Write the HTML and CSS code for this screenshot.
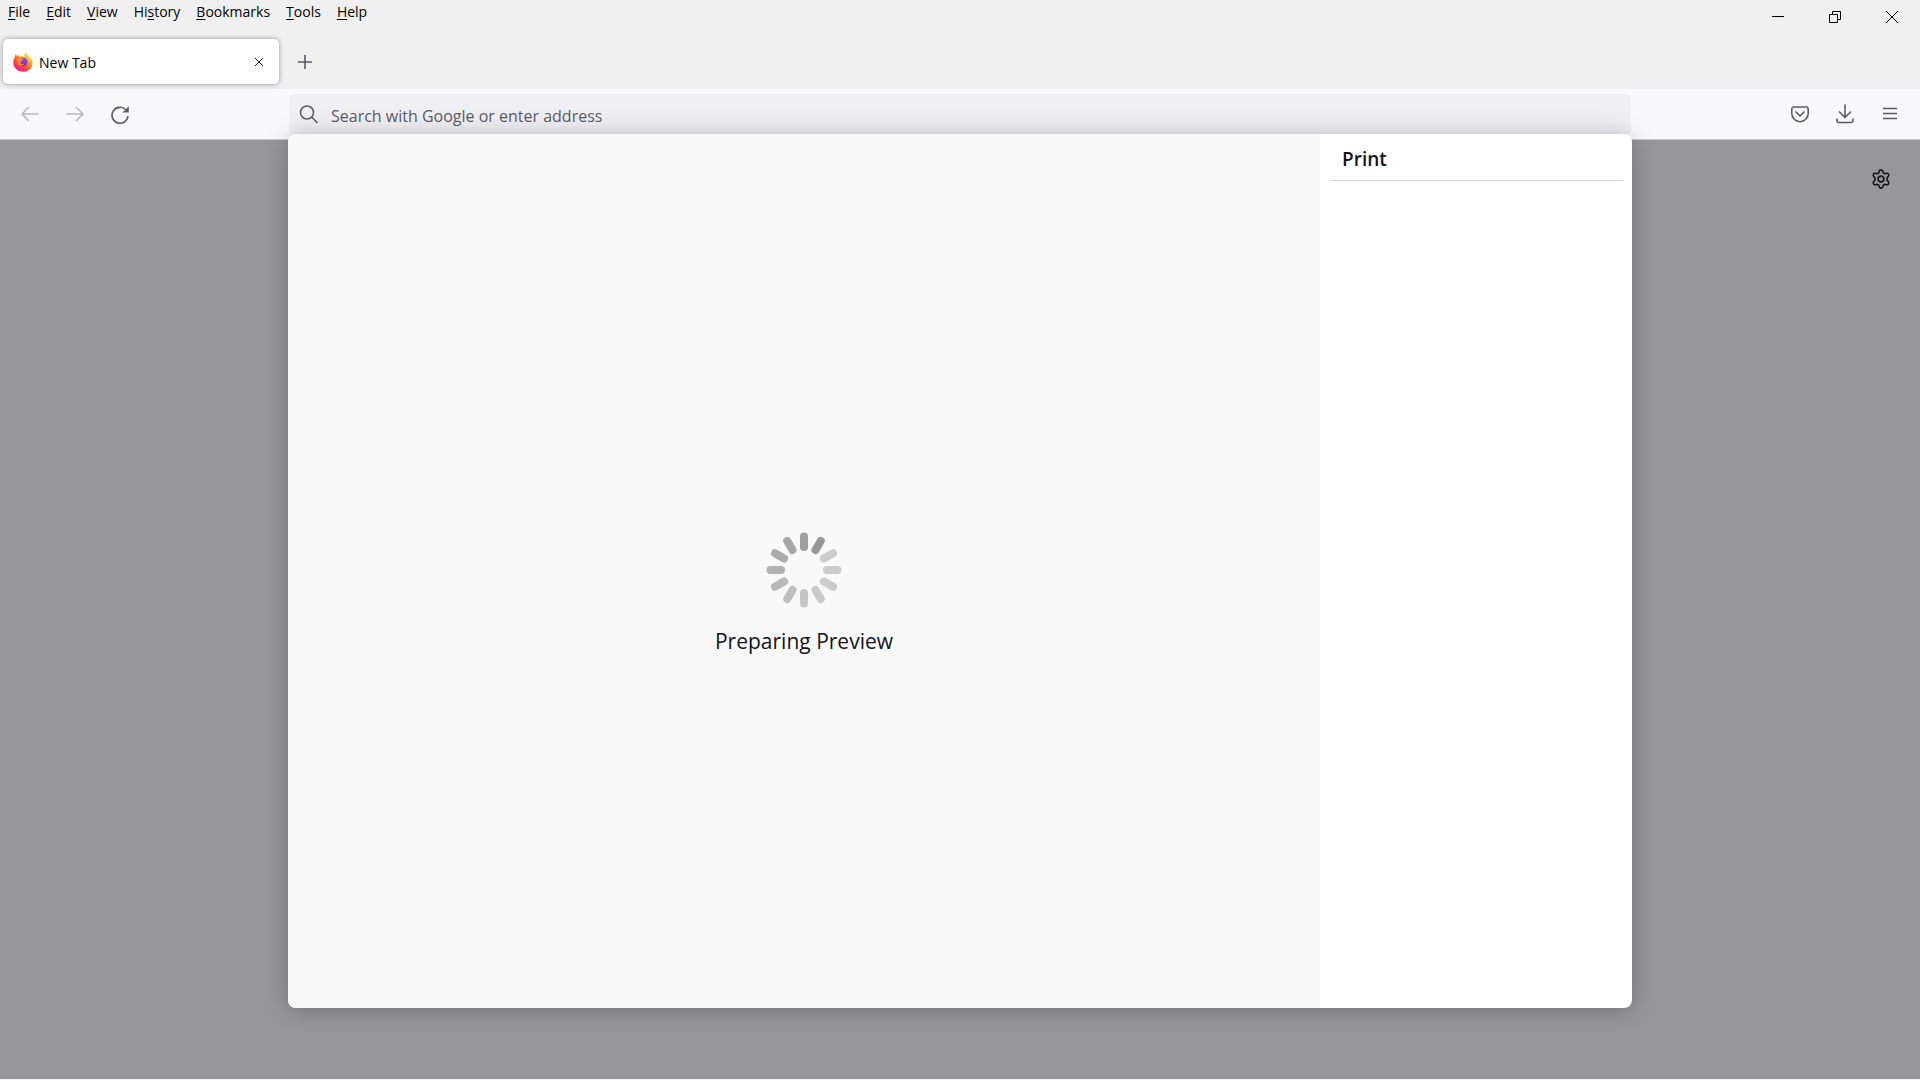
FILE: index.html
```html
<!DOCTYPE html>
<html lang="en">
<head>
<meta charset="UTF-8">
<meta name="viewport" content="width=device-width, initial-scale=1.0">
<title>New Tab</title>
<link rel="stylesheet" href="styles.css">
</head>
<body>

<header class="titlebar">
    <nav class="menubar">
        <button><u>F</u>ile</button>
        <button><u>E</u>dit</button>
        <button><u>V</u>iew</button>
        <button>Hi<u>s</u>tory</button>
        <button><u>B</u>ookmarks</button>
        <button><u>T</u>ools</button>
        <button><u>H</u>elp</button>
    </nav>
    <div class="window-controls">
        <button aria-label="Minimize">
            <svg width="14" height="14" viewBox="0 0 14 14"><path d="M1 6.500h12"/></svg>
        </button>
        <button aria-label="Restore">
            <svg width="14" height="14" viewBox="0 0 14 14"><path d="M1.500 4.500h8v8h-8zM4.500 4.500v-3h8v8h-3"/></svg>
        </button>
        <button aria-label="Close">
            <svg width="14" height="14" viewBox="0 0 14 14"><path d="M1 1l12 12M13 1L1 13"/></svg>
        </button>
    </div>
</header>

<div class="tabs">
    <div class="tab">
        <svg class="favicon" width="20" height="20" viewBox="0 0 20 20">
            <defs>
                <linearGradient id="flame" x1="0.85" y1="0.1" x2="0.25" y2="0.95">
                    <stop offset="0" stop-color="#fff44f"/>
                    <stop offset="0.35" stop-color="#ffa01e"/>
                    <stop offset="0.65" stop-color="#ff4a3a"/>
                    <stop offset="1" stop-color="#e7159a"/>
                </linearGradient>
                <linearGradient id="globe" x1="0.7" y1="0" x2="0.3" y2="1">
                    <stop offset="0" stop-color="#a03be0"/>
                    <stop offset="1" stop-color="#5a45d8"/>
                </linearGradient>
            </defs>
            <path fill="url(#flame)" d="M12.600 0.300c1.700 1.300 2 2.800 3.100 3.900 0.500 0.500 1.100 0.800 1.500 1.500 1.500 1.800 2.400 3.300 2.400 5.300 0 5-4.200 8.800-9.400 8.800S0.300 15.800 0.300 10.600c0-2 0.500-3.900 1.500-5.500l0.700-2.800 1.500 1.800 0.900-1.600 1.600 2.200c2-0.700 3.600-0.300 4.700 0.300-0.200-1.800 0.200-3.500 1.400-4.700z"/>
            <circle cx="10.400" cy="10" r="4.200" fill="url(#globe)"/>
            <path fill="#ff8a1c" d="M3.800 6.500c1.700-0.900 3.600-0.700 4.700 0.300l2.200 0.200c-0.100 1-1.100 1.300-2.100 1.800-0.300 0.500-0.200 1.300-1.300 1.400 0.400 1.600 2 2.400 3.900 1.600-1.300 2.200-4.800 2.400-6.300 0.200-1.100-1.600-1.300-3.500-1.100-5.500z"/>
        </svg>
        <span class="tab-label">New Tab</span>
        <button class="tab-close" aria-label="Close tab">
            <svg width="10" height="10" viewBox="0 0 10 10"><path d="M1 1l8 8M9 1L1 9"/></svg>
        </button>
    </div>
    <button class="new-tab" aria-label="New tab">
        <svg width="16" height="16" viewBox="0 0 16 16"><path d="M8 1v14M1 8h14"/></svg>
    </button>
</div>

<div class="toolbar">
    <div class="nav-buttons">
        <button aria-label="Back" disabled>
            <svg width="20" height="20" viewBox="0 0 20 20"><path d="M18.500 10H2M9 3l-7 7 7 7"/></svg>
        </button>
        <button aria-label="Forward" disabled>
            <svg width="20" height="20" viewBox="0 0 20 20"><path d="M1.500 10H18M11 3l7 7-7 7"/></svg>
        </button>
        <button aria-label="Reload">
            <svg width="20" height="20" viewBox="0 0 20 20"><path d="M18 12a8 8 0 1 1-2-6"/><path class="solid" d="M18.800 2.300v6.200h-6.200z"/></svg>
        </button>
    </div>
    <label class="urlbar">
        <svg width="20" height="20" viewBox="0 0 20 20"><circle cx="8" cy="7.500" r="6.500"/><path d="M12.800 12.300l5.700 5.700"/></svg>
        <input type="text" placeholder="Search with Google or enter address" aria-label="Search with Google or enter address">
    </label>
    <div class="nav-buttons right">
        <button aria-label="Save to Pocket">
            <svg width="20" height="20" viewBox="0 0 20 20"><path d="M4 3h12q2.200 0 2.200 2.200V9.500a8.200 8.200 0 0 1-16.400 0V5.200Q1.800 3 4 3z"/><path d="M5.500 7.500l4.500 4.500 4.500-4.500"/></svg>
        </button>
        <button aria-label="Downloads">
            <svg width="20" height="20" viewBox="0 0 20 20"><path d="M10 0.500V13M4 7.500l6 6 6-6M2 14.500v2q0 2 2 2h12q2 0 2-2v-2"/></svg>
        </button>
        <button aria-label="Menu">
            <svg width="20" height="20" viewBox="0 0 20 20"><path d="M3 4.500h14M3 9.500h14M3 14.500h14"/></svg>
        </button>
    </div>
</div>

<main class="content">
    <button class="settings" aria-label="Personalize new tab">
        <svg width="20" height="20" viewBox="0 0 20 20"><path d="M8.200 2.200Q8.600 0.900 10 0.900t1.800 1.300l0.400 1.700 1.600 0.900 1.700-0.500q1.300-0.300 2 0.900t-0.200 2.200l-1.200 1.300v2.600l1.200 1.300q0.900 1 0.200 2.200t-2 0.900l-1.700-0.500-1.600 0.900-0.400 1.700Q11.400 19.100 10 19.100t-1.800-1.300l-0.400-1.700-1.600-0.900-1.700 0.500q-1.300 0.300-2-0.900t0.200-2.200l1.200-1.300V8.700L2.700 7.400Q1.800 6.400 2.500 5.200t2-0.900l1.700 0.500 1.600-0.900z"/><circle cx="10" cy="10" r="2.900"/></svg>
    </button>

    <div class="print-dialog" role="dialog" aria-labelledby="print-title">
        <div class="preview">
            <svg class="spinner" width="76" height="76" viewBox="-38 -38 76 76">
                <g stroke-width="8" stroke-linecap="round">
                    <path stroke="#9f9f9f" d="M0-33.500V-23"/>
                    <path stroke="#979797" d="M0-33.500V-23" transform="rotate(30)"/>
                    <path stroke="#cccccc" d="M0-33.500V-23" transform="rotate(60)"/>
                    <path stroke="#cccccc" d="M0-33.500V-23" transform="rotate(90)"/>
                    <path stroke="#cccccc" d="M0-33.500V-23" transform="rotate(120)"/>
                    <path stroke="#cacaca" d="M0-33.500V-23" transform="rotate(150)"/>
                    <path stroke="#c5c5c5" d="M0-33.500V-23" transform="rotate(180)"/>
                    <path stroke="#bfbfbf" d="M0-33.500V-23" transform="rotate(210)"/>
                    <path stroke="#b8b8b8" d="M0-33.500V-23" transform="rotate(240)"/>
                    <path stroke="#b2b2b2" d="M0-33.500V-23" transform="rotate(270)"/>
                    <path stroke="#acacac" d="M0-33.500V-23" transform="rotate(300)"/>
                    <path stroke="#a6a6a6" d="M0-33.500V-23" transform="rotate(330)"/>
                </g>
            </svg>
            <p>Preparing Preview</p>
        </div>
        <aside class="print-settings">
            <h1 id="print-title">Print</h1>
        </aside>
    </div>
</main>

</body>
</html>
```

FILE: styles.css
```css
* { box-sizing: border-box; }
body { font-family: "Open Sans", "Noto Sans", sans-serif; font-size: 14px; color: #000; background: #f0f0f0; margin: 0; min-height: 100vh; display: flex; flex-direction: column; }
button { font: inherit; color: inherit; background: none; border: none; padding: 0; display: flex; align-items: center; justify-content: center; }
svg { display: block; flex: none; fill: none; stroke: #5b5b66; stroke-width: 1.6; stroke-linejoin: round; }

/* menu bar and window buttons */
.titlebar { display: flex; justify-content: space-between; height: 39px; }
.menubar { display: flex; align-items: flex-start; gap: 16px; padding: 2px 8px; }
.menubar button { line-height: 20px; }
.menubar u { text-underline-offset: 2px; }
.window-controls { display: flex; height: 34px; }
.window-controls button { width: 57px; }
.window-controls svg { stroke: #000; stroke-width: 1; stroke-linejoin: miter; }

/* tabs */
.tabs { display: flex; padding: 0 3px 5px; }
.tab { display: flex; align-items: center; gap: 6px; width: 276px; height: 45px; padding: 0 10px; background: #fff; border-radius: 5px; box-shadow: 0 0 5px rgba(0, 0, 0, 0.4); }
.favicon { stroke: none; }
.tab-label { flex: 1; padding-top: 1px; }
.tab-close { width: 20px; height: 20px; }
.tab-close svg { stroke: #15141a; stroke-width: 1; }
.new-tab { width: 52px; height: 45px; }

/* navigation toolbar */
.toolbar { display: grid; grid-template-columns: 1fr 70% 1fr; height: 51px; background: #f9f9fb; border-bottom: 1px solid #ccc; }
.nav-buttons { display: flex; align-items: center; padding: 0 8px 0 7px; }
.nav-buttons.right { justify-content: flex-end; }
.nav-buttons button { width: 45px; height: 40px; }
.nav-buttons button:disabled { opacity: 0.4; }
.solid { fill: #5b5b66; stroke: none; }
.urlbar { display: flex; align-items: center; gap: 12px; margin: 5px 1px 4px; padding: 0 10px; background: #f0f0f4; border-radius: 5px; }
.urlbar input { flex: 1; font: inherit; font-size: 16px; background: none; border: none; padding: 2px 0 0; outline: none; }
.urlbar input::placeholder { color: #5b5b66; opacity: 1; }

/* page area dimmed behind the dialog */
.content { position: relative; flex: 1; background: #97969b; border-bottom: 1px solid #efefef; }
.settings { width: 40px; height: 40px; margin: 19px 19px 0 auto; }
.settings svg { stroke: #15141a; }

.print-dialog { position: absolute; top: -6px; bottom: 71px; left: 15%; width: 70%; display: flex; background: #fff; border-radius: 8px; box-shadow: 0 2px 24px rgba(0, 0, 0, 0.25); overflow: hidden; }
.preview { flex: 1; display: flex; flex-direction: column; align-items: center; justify-content: center; gap: 18px; padding-top: 46px; background: #f9f9f9; }
.preview p { margin: 0; font-size: 21px; line-height: 30px; color: #15141a; }
.print-settings { width: 312px; padding: 0 9px 0 10px; }
.print-settings h1 { margin: 0; padding: 12px 12px 7px; font-size: 19px; line-height: 27px; font-weight: 600; color: #15141a; border-bottom: 1px solid #d7d7db; }
```
